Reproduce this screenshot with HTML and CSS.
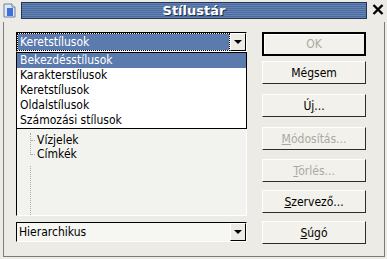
FILE: index.html
```html
<!DOCTYPE html>
<html lang="hu">
<head>
  <meta charset="UTF-8" />
  <title>Stílustár</title>
  <link rel="stylesheet" href="styles.css">
</head>
<body>
  <div class="window">
    <div class="titlerow">
      <svg class="appicon" width="13" height="15" viewBox="0 0 13 15">
        <path d="M1 1h8l3 3v10H1z" fill="#dfe6f5" stroke="#6d7fa8"/>
        <path d="M4 5h6v8H4z" fill="#3f6fd8"/>
        <path d="M9 1v3h3" fill="#fff" stroke="#6d7fa8"/>
      </svg>
      <div class="titlebar"><span>Stílustár</span></div>
      <svg class="close" width="12" height="11" viewBox="0 0 12 11">
        <path d="M1.5 1l9 9M10.5 1l-9 9" stroke="#000" stroke-width="2.4"/>
      </svg>
    </div>

    <div class="client">
      <div class="leftcol">
        <div class="combo">
          <div class="combo-text"><span class="focus">Keretstílusok</span></div>
          <div class="arrowbtn"><i></i></div>
        </div>

        <div class="listbox">
          <ul class="tree">
            <li>Vízjelek</li>
            <li class="last">Címkék</li>
          </ul>
        </div>

        <ul class="dropdown">
          <li class="sel">Bekezdésstílusok</li>
          <li>Karakterstílusok</li>
          <li>Keretstílusok</li>
          <li>Oldalstílusok</li>
          <li>Számozási stílusok</li>
        </ul>

        <div class="combo plain">
          <div class="combo-text">Hierarchikus</div>
          <div class="arrowbtn"><i></i></div>
        </div>
      </div>

      <div class="rightcol">
        <button class="btn default" disabled>OK</button>
        <button class="btn">Mégsem</button>
        <button class="btn gap">Ú<u>j</u>...</button>
        <button class="btn gap" disabled><u>M</u>ódosítás...</button>
        <button class="btn gap2" disabled><u>T</u>örlés...</button>
        <button class="btn gap3"><u>S</u>zervező...</button>
        <button class="btn gap3"><u>S</u>úgó</button>
      </div>
    </div>
  </div>
</body>
</html>
```

FILE: styles.css
```css
body {
  margin: 0;
  background: #ecebe5;
  font-family: "DejaVu Sans Condensed", "DejaVu Sans", sans-serif;
  font-stretch: condensed;
  font-size: 12px;
  color: #000;
}

.window {
  width: 387px;
  height: 259px;
  display: flex;
  flex-direction: column;
}

.titlerow {
  height: 22px;
  display: flex;
  align-items: center;
}

.appicon {
  margin: 0 5px 2px 3px;
}

.titlebar {
  flex: 1;
  height: 15px;
  margin-bottom: 2px;
  border: 1px solid #26354f;
  background: repeating-linear-gradient(#6282b6 0 1px, #4e6d9f 1px 2px);
  display: flex;
  justify-content: center;
  align-items: center;
}

.titlebar span {
  font-family: "DejaVu Sans", sans-serif;
  font-stretch: normal;
  font-weight: bold;
  font-size: 13px;
  color: #fff;
  text-shadow: 1px 1px 0 #1d2a40;
}

.close {
  margin: 0 3px 3px 5px;
}

.client {
  flex: 1;
  margin: 0 2px 2px 3px;
  border: 1px solid #7d7c78;
  border-top: none;
  padding: 10px 0 0 12px;
  display: flex;
  gap: 15px;
  position: relative;
}

.leftcol {
  width: 231px;
  display: flex;
  flex-direction: column;
}

.combo {
  height: 20px;
  display: flex;
  border-top: 1px solid #000;
  border-left: 1px solid #000;
  border-right: 1px solid #fff;
  border-bottom: 1px solid #fff;
  box-sizing: border-box;
  background: #f6f6f2;
}

.combo-text {
  flex: 1;
  padding: 1px;
  display: flex;
}

.combo-text .focus {
  flex: 1;
  background: #5b7aad;
  color: #fff;
  outline: 1px dotted #000;
  padding: 0 2px;
  line-height: 16px;
}

.plain .combo-text {
  padding-left: 2px;
  line-height: 16px;
}

.arrowbtn {
  width: 16px;
  background: #ecebe5;
  border-left: 1px solid #fff;
  border-top: 1px solid #fff;
  border-right: 1px solid #000;
  border-bottom: 1px solid #000;
  box-sizing: border-box;
  display: flex;
  justify-content: center;
  align-items: center;
}

.arrowbtn i {
  width: 0;
  height: 0;
  border-left: 4px solid transparent;
  border-right: 4px solid transparent;
  border-top: 4px solid #000;
}

.listbox {
  margin-top: 4px;
  height: 160px;
  box-sizing: border-box;
  border-top: 1px solid #000;
  border-left: 1px solid #000;
  border-right: 1px solid #fff;
  border-bottom: 1px solid #fff;
  background: #f2f2ee;
  margin-bottom: 6px;
}

.tree {
  list-style: none;
  margin: 76px 0 0 13px;
  padding: 0 0 0 5px;
  border-left: 1px dotted #aaa;
  height: 82px;
}

.tree li {
  position: relative;
  line-height: 14px;
  height: 14px;
  padding-left: 1px;
}

.tree li::before {
  content: "";
  position: absolute;
  left: -5px;
  top: 7px;
  width: 4px;
  border-top: 1px dotted #aaa;
}

.tree li.last::after {
  content: "";
  position: absolute;
  left: -6px;
  top: 8px;
  width: 2px;
  height: 10px;
  background: #f2f2ee;
}

.dropdown {
  position: absolute;
  left: 12px;
  top: 30px;
  width: 231px;
  box-sizing: border-box;
  margin: 0;
  padding: 0;
  list-style: none;
  background: #fff;
  border: 1px solid #000;
}

.dropdown li {
  height: 15px;
  line-height: 15px;
  padding-left: 3px;
}

.dropdown li.sel {
  background: #5b7aad;
  color: #fff;
}

.rightcol {
  width: 104px;
  display: flex;
  flex-direction: column;
}

.btn {
  height: 23px;
  font: inherit;
  color: #000;
  background: #f2f1eb;
  border-top: 1px solid #fff;
  border-left: 1px solid #fff;
  border-right: 1px solid #2c2c2a;
  border-bottom: 1px solid #2c2c2a;
  padding: 0;
  margin-top: 5px;
  text-align: center;
}

.btn:disabled {
  color: #aaa9a3;
}

.btn.default {
  height: 24px;
  margin-top: 0;
  border: 2px solid #000;
  box-shadow: inset 1px 1px 0 #fff;
}

.btn.gap {
  margin-top: 10px;
}

.btn.gap2 {
  margin-top: 9px;
}

.btn.gap3 {
  margin-top: 8px;
}
```
